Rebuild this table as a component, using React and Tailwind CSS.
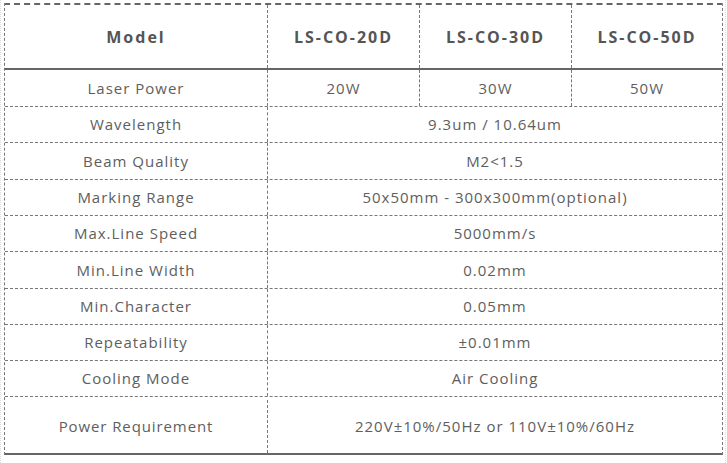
import React from "react";

const rows = [
  { label: "Laser Power", vals: ["20W", "30W", "50W"], h: "h-[37px]" },
  { label: "Wavelength", span: "9.3um / 10.64um", h: "h-[36px]" },
  { label: "Beam Quality", span: "M2<1.5", h: "h-[37px]" },
  { label: "Marking Range", span: "50x50mm - 300x300mm(optional)", h: "h-[36px]" },
  { label: "Max.Line Speed", span: "5000mm/s", h: "h-[36px]" },
  { label: "Min.Line Width", span: "0.02mm", h: "h-[37px]" },
  { label: "Min.Character", span: "0.05mm", h: "h-[36px]" },
  { label: "Repeatability", span: "±0.01mm", h: "h-[36px]" },
  { label: "Cooling Mode", span: "Air Cooling", h: "h-[36px]" },
  { label: "Power Requirement", span: "220V±10%/50Hz or 110V±10%/60Hz", h: "h-[58px] pt-[3px]", last: true },
];

export default function App() {
  return (
    <div
      className="w-[727px] h-[463px] bg-white text-[#5e5e5e]"
      style={{ fontFamily: '"Open Sans", "Noto Sans", sans-serif' }}
    >
      <div className="w-[726px] h-[463px] border-x border-dotted border-[#dcdcdc] pl-[3px] pt-[3px]">
        <div className="w-[719px] border-x border-dashed border-[#777] border-t-2 border-t-[#666] border-t-solid">
          <div className="grid grid-cols-[262px_152px_152px_151px] h-[65px] border-b-2 border-solid border-b-[#666] text-[#555]">
            {["Model", "LS-CO-20D", "LS-CO-30D", "LS-CO-50D"].map((t, i) => (
              <div
                key={t}
                className={
                  "flex items-center justify-center text-[16px] font-bold tracking-[2px] " +
                  (i > 0 ? "border-l border-dashed border-[#777]" : "")
                }
              >
                {t}
              </div>
            ))}
          </div>
          {rows.map((r) => (
            <div
              key={r.label}
              className={
                "grid grid-cols-[262px_152px_152px_151px] text-[15px] tracking-[1px] " +
                r.h +
                " " +
                (r.last
                  ? "border-b-2 border-solid border-b-[#666]"
                  : "border-b border-dashed border-[#777]")
              }
            >
              <div className={"flex items-center justify-center" + (r.last ? " tracking-[0.9px]" : "")}>{r.label}</div>
              {r.vals ? (
                r.vals.map((v) => (
                  <div
                    key={v}
                    className="flex items-center justify-center border-l border-dashed border-[#777]"
                  >
                    {v}
                  </div>
                ))
              ) : (
                <div className="col-span-3 flex items-center justify-center border-l border-dashed border-[#777]">
                  {r.span}
                </div>
              )}
            </div>
          ))}
        </div>
      </div>
    </div>
  );
}
